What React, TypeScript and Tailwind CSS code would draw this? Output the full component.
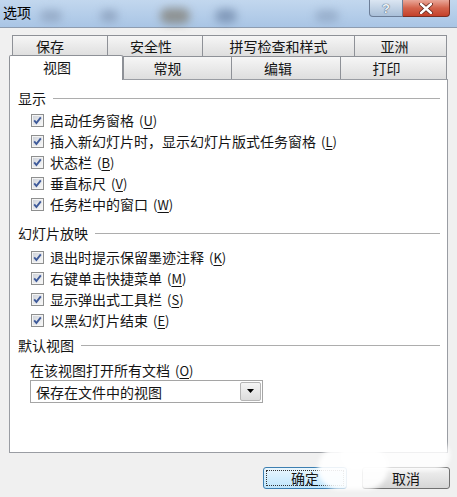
import React from 'react';

const FONT = { fontFamily: '"Noto Sans CJK SC", "Noto Sans", sans-serif' };

// one row of tabs on the option dialog (back row / front row)
const backTabs = [
  { label: '保存', cls: 'w-[95px] pr-[20px]' },
  { label: '安全性', cls: 'w-[95px] pr-[8px]' },
  { label: '拼写检查和样式', cls: 'w-[152px]' },
  { label: '亚洲', cls: 'w-[93px] pr-[12px] border-r' },
];

const frontTabs = [
  { label: '常规', cls: 'w-[108px] pr-[20px]' },
  { label: '编辑', cls: 'w-[109px] pr-[16px]' },
  { label: '打印', cls: 'w-[107px] pr-[14px] border-r' },
];

const showItems = [
  { text: '启动任务窗格', key: 'U' },
  { text: '插入新幻灯片时，显示幻灯片版式任务窗格', key: 'L' },
  { text: '状态栏', key: 'B' },
  { text: '垂直标尺', key: 'V' },
  { text: '任务栏中的窗口', key: 'W' },
];

const slideItems = [
  { text: '退出时提示保留墨迹注释', key: 'K' },
  { text: '右键单击快捷菜单', key: 'M' },
  { text: '显示弹出式工具栏', key: 'S' },
  { text: '以黑幻灯片结束', key: 'E' },
];

function CheckBox() {
  return (
    <svg width="13" height="13" viewBox="0 0 13 13" className="shrink-0">
      <defs>
        <linearGradient id="cbg" x1="0" y1="0" x2="1" y2="1">
          <stop offset="0" stopColor="#cfd3da" />
          <stop offset="1" stopColor="#f7f7f7" />
        </linearGradient>
      </defs>
      <rect x="0.5" y="0.5" width="12" height="12" fill="#f4f4f4" stroke="#8e8f8f" />
      <rect x="2" y="2" width="9" height="9" fill="url(#cbg)" />
      <path d="M3.2 6.4 L5.4 9 L9.8 3.4" stroke="#3e5a9a" strokeWidth="1.9" fill="none" />
    </svg>
  );
}

function Mnemonic({ k }: { k: string }) {
  return (
    <span className="ml-[5px] text-[13px]">
      (<span className="underline underline-offset-2">{k}</span>)
    </span>
  );
}

function SectionHeader({ title, cls }: { title: string; cls: string }) {
  return (
    <div className={`flex items-center h-[20px] pl-[8px] pr-[7px] ${cls}`}>
      <span>{title}</span>
      <div className="flex-1 h-px bg-[#adadad] ml-[7px]" />
    </div>
  );
}

function CheckRow({ text, k }: { text: string; k: string }) {
  return (
    <div className="flex items-center h-[21px] pl-[21px] gap-[6px]">
      <CheckBox />
      <span className="whitespace-nowrap">
        {text}
        <Mnemonic k={k} />
      </span>
    </div>
  );
}

export default function App() {
  return (
    <div className="relative w-[457px] h-[497px] overflow-hidden bg-[#f0f0f0] text-[14px] leading-[20px] text-[#141414]" style={FONT}>
      {/* Title bar */}
      <div className="relative h-[28px] flex items-start bg-gradient-to-b from-[#c2d7ee] to-[#a9c5e5] border-b border-[#8d9cb0]">
        <div className="absolute left-[40px] top-[10px] w-[22px] h-[12px] rounded-full bg-[#8497b3] blur-[4px] opacity-60" />
        <div className="absolute left-[100px] top-[10px] w-[18px] h-[12px] rounded-full bg-[#7d90ad] blur-[4px] opacity-60" />
        <div className="absolute left-[160px] top-[8px] w-[30px] h-[16px] rounded-full bg-[#7f7b70] blur-[4px] opacity-70" />
        <div className="absolute left-[215px] top-[9px] w-[22px] h-[14px] rounded-full bg-[#62799c] blur-[4px] opacity-60" />
        <div className="absolute left-[315px] top-[10px] w-[24px] h-[12px] rounded-full bg-[#7d92b0] blur-[4px] opacity-50" />
        <span className="relative pl-[3px] pt-[2px] text-[14px] text-black">选项</span>
        <div className="relative ml-auto mr-[7px] flex">
          <div className="w-[34px] h-[17px] flex items-center justify-center rounded-bl-[4px] border border-t-0 border-[#6c7e98] bg-gradient-to-b from-[#dbe6f2] to-[#a9bfd8]">
            <span className="text-[13px] font-bold leading-none text-[#eef3f9] [text-shadow:0_0_1px_#46576f,0_0_1px_#46576f]" style={{ fontFamily: '"Liberation Sans", sans-serif' }}>?</span>
          </div>
          <div className="w-[47px] h-[17px] flex items-center justify-center rounded-br-[4px] border border-l-0 border-t-0 border-[#7a2e22] bg-gradient-to-b from-[#e9a799] via-[#d3634c] to-[#c4402a]">
            <svg width="14" height="11" viewBox="0 0 14 11">
              <path d="M2 1 L12 10 M12 1 L2 10" stroke="#5a2018" strokeWidth="4" strokeLinecap="round" />
              <path d="M2 1 L12 10 M12 1 L2 10" stroke="#ffffff" strokeWidth="2.4" strokeLinecap="round" />
            </svg>
          </div>
        </div>
      </div>

      {/* Dialog body */}
      <div className="pl-[9px] pt-[7px] border-l-2 border-[#cfd9e4] -ml-[2px]">
        {/* back row of tabs */}
        <div className="flex ml-[3px] h-[21px]">
          {backTabs.map(t => (
            <div key={t.label} className={`flex items-center justify-center border-t border-l border-[#8e9197] bg-gradient-to-b from-[#f6f6f6] to-[#dedede] ${t.cls}`}>
              {t.label}
            </div>
          ))}
        </div>

        {/* front row of tabs */}
        <div className="flex items-start h-[23px]">
          <div className="relative z-10 w-[114px] h-[25px] -mt-px flex items-center justify-center pr-[18px] pb-[2px] bg-white border-t border-l border-r border-[#8e9197] rounded-t-[2px]">
            视图
          </div>
          {frontTabs.map(t => (
            <div key={t.label} className={`h-[23px] flex items-center justify-center border-t border-l border-[#8e9197] bg-gradient-to-b from-[#f6f6f6] to-[#dedede] ${t.cls}`}>
              {t.label}
            </div>
          ))}
        </div>

        {/* tab page */}
        <div className="w-[439px] h-[374px] bg-white border border-[#9a9da3] pt-[8px]">
          <SectionHeader title="显示" cls="" />
          <div className="mt-[2px]">
            {showItems.map(i => (
              <CheckRow key={i.key} text={i.text} k={i.key} />
            ))}
          </div>

          <SectionHeader title="幻灯片放映" cls="mt-[8px]" />
          <div className="mt-[4px]">
            {slideItems.map(i => (
              <CheckRow key={i.key} text={i.text} k={i.key} />
            ))}
          </div>

          <SectionHeader title="默认视图" cls="mt-[4px]" />
          <div className="pl-[20px] mt-[6px] leading-[18px]">
            在该视图打开所有文档
            <Mnemonic k="O" />
          </div>
          <div className="ml-[20px] w-[233px] h-[23px] flex items-center border border-[#a5a5a5] bg-white pl-[5px] pr-[1px]">
            <span className="flex-1">保存在文件中的视图</span>
            <div className="w-[21px] h-[19px] flex items-center justify-center border border-[#b5b5b5] rounded-[2px] bg-gradient-to-b from-[#f5f5f5] to-[#dcdcdc]">
              <svg width="7" height="5" viewBox="0 0 7 5">
                <path d="M0 0 H7 L3.5 4 Z" fill="#000" />
              </svg>
            </div>
          </div>
        </div>

        {/* buttons */}
        <div className="flex justify-end gap-[15px] pr-[7px] mt-[14px]">
          <button className="w-[84px] h-[22px] rounded-[3px] border border-[#3c7fb1] bg-gradient-to-b from-[#eaf6fd] to-[#bee6fd] p-[2px]">
            <div className="w-full h-full flex items-center justify-center border border-dotted border-[#333]">确定</div>
          </button>
          <button className="w-[88px] h-[22px] rounded-[3px] border border-[#707070] bg-gradient-to-b from-[#f2f2f2] to-[#d6d6d6] flex items-center justify-center">
            取消
          </button>
        </div>
      </div>

      {/* watermark blob over the lower right */}
      <div className="absolute left-[318px] top-[446px] w-[70px] h-[44px] rounded-[22px] bg-white/90 blur-[2px]" />
      <div className="absolute left-[340px] top-[440px] w-[110px] h-[30px] rounded-[16px] bg-white/85 blur-[2px]" />
    </div>
  );
}
